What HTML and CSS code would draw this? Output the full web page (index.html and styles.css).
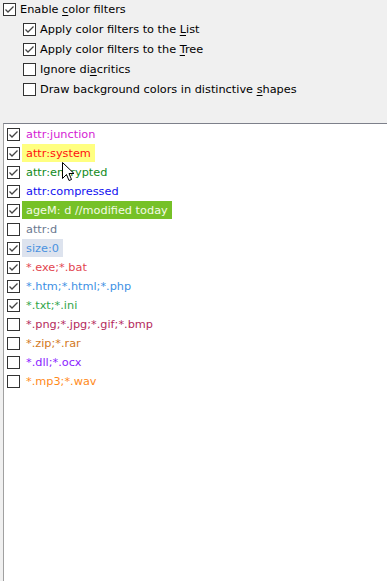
FILE: index.html
```html
<!DOCTYPE html>
<html>
<head>
<meta charset="utf-8">
<link rel="stylesheet" href="styles.css">
</head>
<body>
<div class="panel">
  <div class="opt">
    <svg class="cb" viewBox="0 0 13 13"><rect x="0.5" y="0.5" width="12" height="12"/><path d="M2.5 6.5 L5 9 L10.5 3.5"/></svg>
    <span>Enable <u>c</u>olor filters</span>
  </div>
  <div class="opt sub">
    <svg class="cb" viewBox="0 0 13 13"><rect x="0.5" y="0.5" width="12" height="12"/><path d="M2.5 6.5 L5 9 L10.5 3.5"/></svg>
    <span>Apply color filters to the <u>L</u>ist</span>
  </div>
  <div class="opt sub">
    <svg class="cb" viewBox="0 0 13 13"><rect x="0.5" y="0.5" width="12" height="12"/><path d="M2.5 6.5 L5 9 L10.5 3.5"/></svg>
    <span>Apply color filters to the <u>T</u>ree</span>
  </div>
  <div class="opt sub">
    <svg class="cb" viewBox="0 0 13 13"><rect x="0.5" y="0.5" width="12" height="12"/></svg>
    <span>Ignore di<u>a</u>critics</span>
  </div>
  <div class="opt sub">
    <svg class="cb" viewBox="0 0 13 13"><rect x="0.5" y="0.5" width="12" height="12"/></svg>
    <span>Draw background colors in distinctive <u>s</u>hapes</span>
  </div>
</div>
<div class="list">
  <div class="item"><svg class="cb" viewBox="0 0 13 13"><rect x="0.5" y="0.5" width="12" height="12"/><path d="M2.5 6.5 L5 9 L10.5 3.5"/></svg><span class="lbl c-junction">attr:junction</span></div>
  <div class="item"><svg class="cb" viewBox="0 0 13 13"><rect x="0.5" y="0.5" width="12" height="12"/><path d="M2.5 6.5 L5 9 L10.5 3.5"/></svg><span class="lbl c-system">attr:system</span></div>
  <div class="item"><svg class="cb" viewBox="0 0 13 13"><rect x="0.5" y="0.5" width="12" height="12"/><path d="M2.5 6.5 L5 9 L10.5 3.5"/></svg><span class="lbl c-encrypted">attr:encrypted</span></div>
  <div class="item"><svg class="cb" viewBox="0 0 13 13"><rect x="0.5" y="0.5" width="12" height="12"/><path d="M2.5 6.5 L5 9 L10.5 3.5"/></svg><span class="lbl c-compressed">attr:compressed</span></div>
  <div class="item"><svg class="cb" viewBox="0 0 13 13"><rect x="0.5" y="0.5" width="12" height="12"/><path d="M2.5 6.5 L5 9 L10.5 3.5"/></svg><span class="lbl c-age">ageM: d //modified today</span></div>
  <div class="item"><svg class="cb" viewBox="0 0 13 13"><rect x="0.5" y="0.5" width="12" height="12"/></svg><span class="lbl c-d">attr:d</span></div>
  <div class="item"><svg class="cb" viewBox="0 0 13 13"><rect x="0.5" y="0.5" width="12" height="12"/><path d="M2.5 6.5 L5 9 L10.5 3.5"/></svg><span class="lbl c-size">size:0</span></div>
  <div class="item"><svg class="cb" viewBox="0 0 13 13"><rect x="0.5" y="0.5" width="12" height="12"/><path d="M2.5 6.5 L5 9 L10.5 3.5"/></svg><span class="lbl c-exe">*.exe;*.bat</span></div>
  <div class="item"><svg class="cb" viewBox="0 0 13 13"><rect x="0.5" y="0.5" width="12" height="12"/><path d="M2.5 6.5 L5 9 L10.5 3.5"/></svg><span class="lbl c-htm">*.htm;*.html;*.php</span></div>
  <div class="item"><svg class="cb" viewBox="0 0 13 13"><rect x="0.5" y="0.5" width="12" height="12"/><path d="M2.5 6.5 L5 9 L10.5 3.5"/></svg><span class="lbl c-txt">*.txt;*.ini</span></div>
  <div class="item"><svg class="cb" viewBox="0 0 13 13"><rect x="0.5" y="0.5" width="12" height="12"/></svg><span class="lbl c-png">*.png;*.jpg;*.gif;*.bmp</span></div>
  <div class="item"><svg class="cb" viewBox="0 0 13 13"><rect x="0.5" y="0.5" width="12" height="12"/></svg><span class="lbl c-zip">*.zip;*.rar</span></div>
  <div class="item"><svg class="cb" viewBox="0 0 13 13"><rect x="0.5" y="0.5" width="12" height="12"/></svg><span class="lbl c-dll">*.dll;*.ocx</span></div>
  <div class="item"><svg class="cb" viewBox="0 0 13 13"><rect x="0.5" y="0.5" width="12" height="12"/></svg><span class="lbl c-mp3">*.mp3;*.wav</span></div>
</div>
<svg class="cursor" width="13" height="21" viewBox="0 0 13 21"><path d="M0.5 0.5 L0.5 16.5 L4.5 12.5 L7 18.5 L9.5 17.5 L7 11.5 L12 11.5 Z"/></svg>
</body>
</html>
```
FILE: styles.css
```css
html, body {
  margin: 0;
  padding: 0;
  height: 100%;
}
body {
  background: #f0f0f0;
  font-family: "DejaVu Sans", Tahoma, sans-serif;
  font-size: 11.3px;
  color: #000;
  display: flex;
  flex-direction: column;
  overflow: hidden;
}
.panel {
  height: 123px;
  flex: none;
}
.opt {
  height: 20px;
  display: flex;
  align-items: flex-start;
  padding-left: 3px;
  gap: 4px;
}
.opt span {
  line-height: 20px;
  height: 20px;
}
.opt.sub {
  padding-left: 23px;
}
.opt u {
  text-decoration-thickness: 1px;
  text-underline-offset: 2px;
}
.cb {
  width: 13px;
  height: 13px;
  flex: none;
  margin-top: 3px;
}
.cb rect {
  fill: #fff;
  stroke: #333;
  stroke-width: 1;
}
.cb path {
  fill: none;
  stroke: #444;
  stroke-width: 1.3;
}
.list {
  flex: 1;
  margin-left: 3px;
  background: #fff;
  border-top: 1px solid #7d808a;
  border-left: 1px solid #a0a0a0;
  padding-top: 1px;
  padding-left: 3px;
}
.item {
  height: 19px;
  display: flex;
  align-items: flex-start;
  gap: 2px;
}
.lbl {
  line-height: 20px;
  height: 18px;
  overflow: hidden;
  padding: 0 4px;
}
.c-junction { color: #d41cd4; }
.c-system { color: #ff1010; background: #ffff80; }
.c-encrypted { color: #0f8a1a; }
.c-compressed { color: #1010f0; }
.c-age { color: #f4fbe6; background: #76c127; }
.c-d { color: #6a7890; }
.c-size { color: #4a92e0; background: #dde3ee; }
.c-exe { color: #e24450; }
.c-htm { color: #3c90e4; }
.c-txt { color: #2fa548; }
.c-png { color: #b42a5c; }
.c-zip { color: #d2781c; }
.c-dll { color: #8a1cff; }
.c-mp3 { color: #ff8a1a; }
.cursor {
  position: absolute;
  left: 62px;
  top: 162px;
}
.cursor path {
  fill: #fff;
  stroke: #000;
  stroke-width: 1;
  stroke-linejoin: miter;
}
```
